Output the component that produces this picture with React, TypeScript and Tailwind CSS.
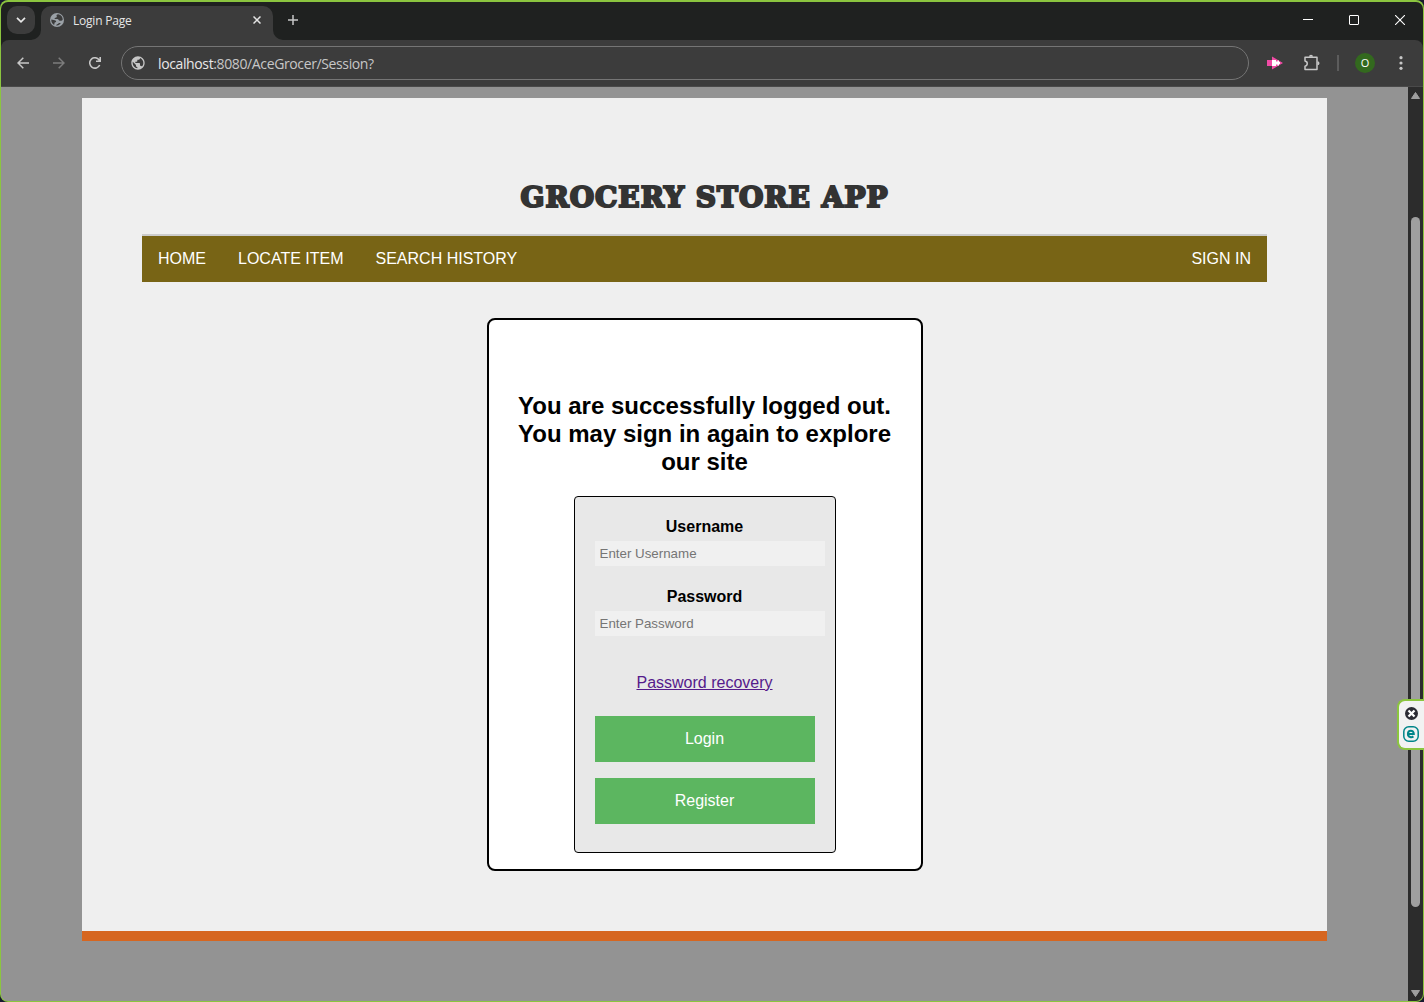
import React from "react";

function Globe({ className }: { className: string }) {
  return (
    <svg viewBox="0 0 24 24" className={className} fill="currentColor">
      <path d="M12 2C6.48 2 2 6.48 2 12s4.48 10 10 10 10-4.48 10-10S17.52 2 12 2zm-1 17.93c-3.95-.49-7-3.85-7-7.93 0-.62.08-1.21.21-1.79L9 15v1c0 1.1.9 2 2 2v1.93zm6.9-2.54c-.26-.81-1-1.39-1.9-1.39h-1v-3c0-.55-.45-1-1-1H8v-2h2c.55 0 1-.45 1-1V7h2c1.100 0 2-.9 2-2v-.41c2.930 1.190 5 4.060 5 7.410 0 2.080-.8 3.970-2.100 5.390z" />
    </svg>
  );
}

function TabGlobe() {
  return (
    <svg viewBox="0 0 14 14" className="ml-[9px] h-[14px] w-[14px] shrink-0">
      <circle cx="7" cy="7" r="7" fill="#9aa0a6" />
      <path
        d="M8.300 1.300C6.500 1.400 6.200 2.500 6.700 3.300 7.300 4.200 6.300 4.800 5.200 4.800 4.500 4.900 4.400 5.700 5 6h2.300c1.300.1 1.200 1.400 2.200 1.700h1.900l1.300-.6A5.700 5.700 0 0 0 8.300 1.300zM1.300 6.600c1.300.5 3.500.4 4.500 1.100.7.6.2 1.500-.6 1.600-.8.2-.5 1.100-.9 1.600-.2.400-.1.900.1 1.300A5.700 5.700 0 0 1 1.300 6.600zM6.400 12.700c-.1-.9.400-1.500 1.300-1.600.7-.1.500-1 1.300-1.100h1.900a5.700 5.700 0 0 1-4.500 2.700z"
        fill="#3c3c3c"
      />
    </svg>
  );
}

function TabStrip() {
  return (
    <div className="flex h-[38px] shrink-0 items-end bg-[#1f2120] font-['Open_Sans','Noto_Sans',sans-serif]">
      <div className="mb-[6px] ml-[6px] flex h-[28px] w-[28px] items-center justify-center rounded-[10px] bg-[#3c3c3c]">
        <svg viewBox="0 0 10 6" className="h-[6px] w-[10px]" fill="none" stroke="#e8e8e8" strokeWidth="1.700">
          <path d="M1 .8 5 4.800 9 .8" />
        </svg>
      </div>
      <div className="relative ml-[6px] flex h-[34px] w-[232px] items-center rounded-t-[10px] bg-[#3c3c3c] pb-[6px]">
        <TabGlobe />
        <span className="ml-[9px] pt-[2px] text-[12px] tracking-[-0.22px] text-[#e6e6e6]">Login Page</span>
        <svg viewBox="0 0 8 8" className="ml-auto mr-[12px] h-[8px] w-[8px]" stroke="#e3e3e3" strokeWidth="1.500">
          <path d="M.5.5l7 7M7.500.5l-7 7" />
        </svg>
        <svg viewBox="0 0 10 10" className="absolute bottom-0 left-[-10px] h-[10px] w-[10px]">
          <path d="M10 0v10H0A10 10 0 0 0 10 0z" fill="#3c3c3c" />
        </svg>
        <svg viewBox="0 0 10 10" className="absolute bottom-0 right-[-10px] h-[10px] w-[10px]">
          <path d="M0 0v10h10A10 10 0 0 1 0 0z" fill="#3c3c3c" />
        </svg>
      </div>
      <svg viewBox="0 0 10 10" className="mb-[15px] ml-[15px] h-[10px] w-[10px]" stroke="#c7c7c7" strokeWidth="1.500">
        <path d="M5 0v10M0 5h10" />
      </svg>
      <div className="mb-[15px] ml-auto mr-[18px] flex items-center gap-[36px]">
        <svg viewBox="0 0 10 10" className="h-[10px] w-[10px]" stroke="#fff">
          <path d="M0 4.500h10" />
        </svg>
        <svg viewBox="0 0 10 10" className="h-[10px] w-[10px]" stroke="#fff" fill="none">
          <rect x=".5" y=".5" width="9" height="9" rx=".5" />
        </svg>
        <svg viewBox="0 0 10 10" className="h-[10px] w-[10px]" stroke="#fff" strokeWidth="1.100">
          <path d="M0 0l10 10M10 0L0 10" />
        </svg>
      </div>
    </div>
  );
}

function Toolbar() {
  return (
    <div className="shrink-0 bg-[#1f2120]">
      <div className="flex h-[47px] items-center rounded-t-[8px] border-b border-[#4a4a4a] bg-[#3c3c3c] font-['Open_Sans','Noto_Sans',sans-serif]">
        <svg viewBox="0 0 12 12" className="ml-[16px] h-[12px] w-[12px]" fill="none" stroke="#c7c7c7" strokeWidth="1.500">
          <path d="M12 6H1M6.300.7 1 6l5.300 5.300" />
        </svg>
        <svg viewBox="0 0 12 12" className="ml-[24px] h-[12px] w-[12px]" fill="none" stroke="#7c7c7c" strokeWidth="1.500">
          <path d="M0 6h11M5.700.7 11 6l-5.300 5.300" />
        </svg>
        <svg viewBox="0 0 12 12" className="ml-[24px] h-[12px] w-[12px]" fill="none" stroke="#c7c7c7" strokeWidth="1.600">
          <path d="M10.700 8A5.200 5.200 0 1 1 10 2.700L11 4M11.200 0v4.300H7" />
        </svg>
        <div className="ml-[20px] flex h-[34px] w-[1128px] items-center rounded-full border border-[#757575]">
          <Globe className="ml-[8px] h-[16px] w-[16px] text-[#c7c7c7]" />
          <span className="ml-[12px] text-[14px] tracking-[-0.375px] text-[#c7c7c7]">
            <span className="text-[#e8e8e8]">localhost</span>:8080/AceGrocer/Session?
          </span>
        </div>
        <svg viewBox="0 0 16 14" className="ml-[18px] h-[14px] w-[16px]">
          <path d="M0 4h5V.5L16 7 5 13.500V10H0z" fill="#f04ba5" />
          <path d="M5 4h4v1.500h1.500V4.500H12V6h1v2h-1v1.500h-1.500v-1H9V10H5z" fill="#fff" />
        </svg>
        <svg viewBox="0 0 17 17" className="mb-[2px] ml-[20px] h-[17px] w-[17px]" fill="none" stroke="#c7c7c7" strokeWidth="1.500">
          <path d="M2 3.200h12v12.300H2v-3.300c3-.6 3-4.600 0-5.200z" strokeLinejoin="round" />
          <path d="M6 2.700a2 2 0 0 1 4 0zM14.500 7.200a2 2 0 0 1 0 4z" fill="#c7c7c7" stroke="none" />
        </svg>
        <div className="ml-[17px] h-[16px] w-[2px] bg-[#5c5c5c]" />
        <div className="ml-[16px] flex h-[20px] w-[20px] items-center justify-center rounded-full bg-[#33691e] pb-px text-[11px] leading-none text-white">
          O
        </div>
        <svg viewBox="0 0 4 14" className="ml-[24px] h-[14px] w-[4px]" fill="#c7c7c7">
          <circle cx="2" cy="1.700" r="1.600" />
          <circle cx="2" cy="7" r="1.600" />
          <circle cx="2" cy="12.300" r="1.600" />
        </svg>
      </div>
    </div>
  );
}

function Field({ label, hint, type }: { label: string; hint: string; type: string }) {
  return (
    <label className="flex flex-col">
      <span className="h-[24px] text-center text-[16px] font-bold leading-[20px]">{label}</span>
      <input
        type={type}
        placeholder={hint}
        className="h-[25px] w-[230px] bg-[#f0f0f0] px-[5px] text-[13.333px] placeholder:text-[#757575]"
      />
    </label>
  );
}

function LoginCard() {
  return (
    <section className="mx-auto mt-[36px] flex h-[553px] w-[436px] flex-col items-center rounded-[8px] border-2 border-black bg-white pt-[72px]">
      <h2 className="w-[396px] text-center text-[24px] font-bold leading-[28px]">
        You are successfully logged out. You may sign in again to explore our site
      </h2>
      <form className="mt-[20px] flex h-[357px] w-[262px] flex-col rounded-[4px] border border-black bg-[#e8e8e8] px-[20px] pt-[20px]">
        <Field label="Username" hint="Enter Username" type="text" />
        <div className="mt-[21px]">
          <Field label="Password" hint="Enter Password" type="password" />
        </div>
        <a className="mt-[38px] text-center text-[16px] leading-[18px] text-[#551a8b] underline">Password recovery</a>
        <button type="button" className="mt-[24px] h-[46px] bg-[#5cb660] text-[16px] text-white">Login</button>
        <button type="button" className="mt-[16px] h-[46px] bg-[#5cb660] text-[16px] text-white">Register</button>
      </form>
    </section>
  );
}

function StorePage() {
  return (
    <div className="h-full w-[1407px] bg-[#939393] pl-[81px] pt-[11px] font-['Liberation_Sans',Arial,sans-serif] text-black">
      <main className="flex h-[843px] w-[1245px] flex-col border-b-[10px] border-[#d66620] bg-[#efefef] px-[60px]">
        <h1 className="mt-[80px] flex h-[40px] items-center justify-center whitespace-nowrap font-['DejaVu_Serif',serif] text-[28px] font-bold tracking-[1px] text-[#333] [-webkit-text-stroke:2.2px_#333]">
          GROCERY STORE APP
        </h1>
        <nav className="mt-[16px] flex h-[48px] items-center gap-[32px] border-t-2 border-[#ccc] bg-[#786415] px-[16px] text-[16px] text-white">
          <a>HOME</a>
          <a>LOCATE ITEM</a>
          <a>SEARCH HISTORY</a>
          <a className="ml-auto">SIGN IN</a>
        </nav>
        <LoginCard />
      </main>
    </div>
  );
}

function Scrollbar() {
  return (
    <div className="flex w-[15px] flex-col items-center bg-[#2c2c2c]">
      <svg viewBox="0 0 9 7" className="mt-[5px] h-[7px] w-[9px]">
        <path d="M4.500.5 8.500 6.500h-8z" fill="#9f9f9f" stroke="#9f9f9f" strokeLinejoin="round" />
      </svg>
      <div className="mt-[118px] h-[690px] w-[9px] rounded-full bg-[#9f9f9f]" />
      <svg viewBox="0 0 9 7" className="mb-[4px] mt-auto h-[7px] w-[9px]">
        <path d="M4.500 6.500 8.500.5h-8z" fill="#9f9f9f" stroke="#9f9f9f" strokeLinejoin="round" />
      </svg>
    </div>
  );
}

function SecurityWidget() {
  return (
    <div className="absolute right-[-1px] top-[697px] flex h-[51px] w-[27px] flex-col items-center gap-[6px] rounded-l-[8px] border-2 border-r-0 border-[#8bc53f] bg-[#f2f2f2] pr-px pt-[6px]">
      <svg viewBox="0 0 13 13" className="h-[13px] w-[13px]">
        <circle cx="6.500" cy="6.500" r="6.500" fill="#2b2b33" />
        <path d="M3.500 3.500l6 6M9.500 3.500l-6 6" stroke="#fff" strokeWidth="2.300" />
      </svg>
      <svg viewBox="0 0 16 16" className="h-[16px] w-[16px]" fill="none" stroke="#008589">
        <rect x=".8" y=".8" width="14.400" height="14.400" rx="5" strokeWidth="1.500" />
        <path d="M5.200 8h5.600c0-4.500-5.900-4.300-5.900 0 0 3.600 4 3.600 5.500 2.400" strokeWidth="2" />
      </svg>
    </div>
  );
}

export default function App() {
  return (
    <div className="h-[1002px] w-[1424px] overflow-hidden bg-[#17192f]">
      <div className="h-full w-full overflow-hidden rounded-[8px] bg-[#8bc53f] pb-px pl-px pr-px pt-[2px]">
        <div className="relative h-full w-full">
          <div className="flex h-full w-full flex-col overflow-hidden rounded-[7px]">
            <TabStrip />
            <Toolbar />
            <div className="flex min-h-0 flex-1">
              <StorePage />
              <Scrollbar />
            </div>
          </div>
          <SecurityWidget />
        </div>
      </div>
    </div>
  );
}
